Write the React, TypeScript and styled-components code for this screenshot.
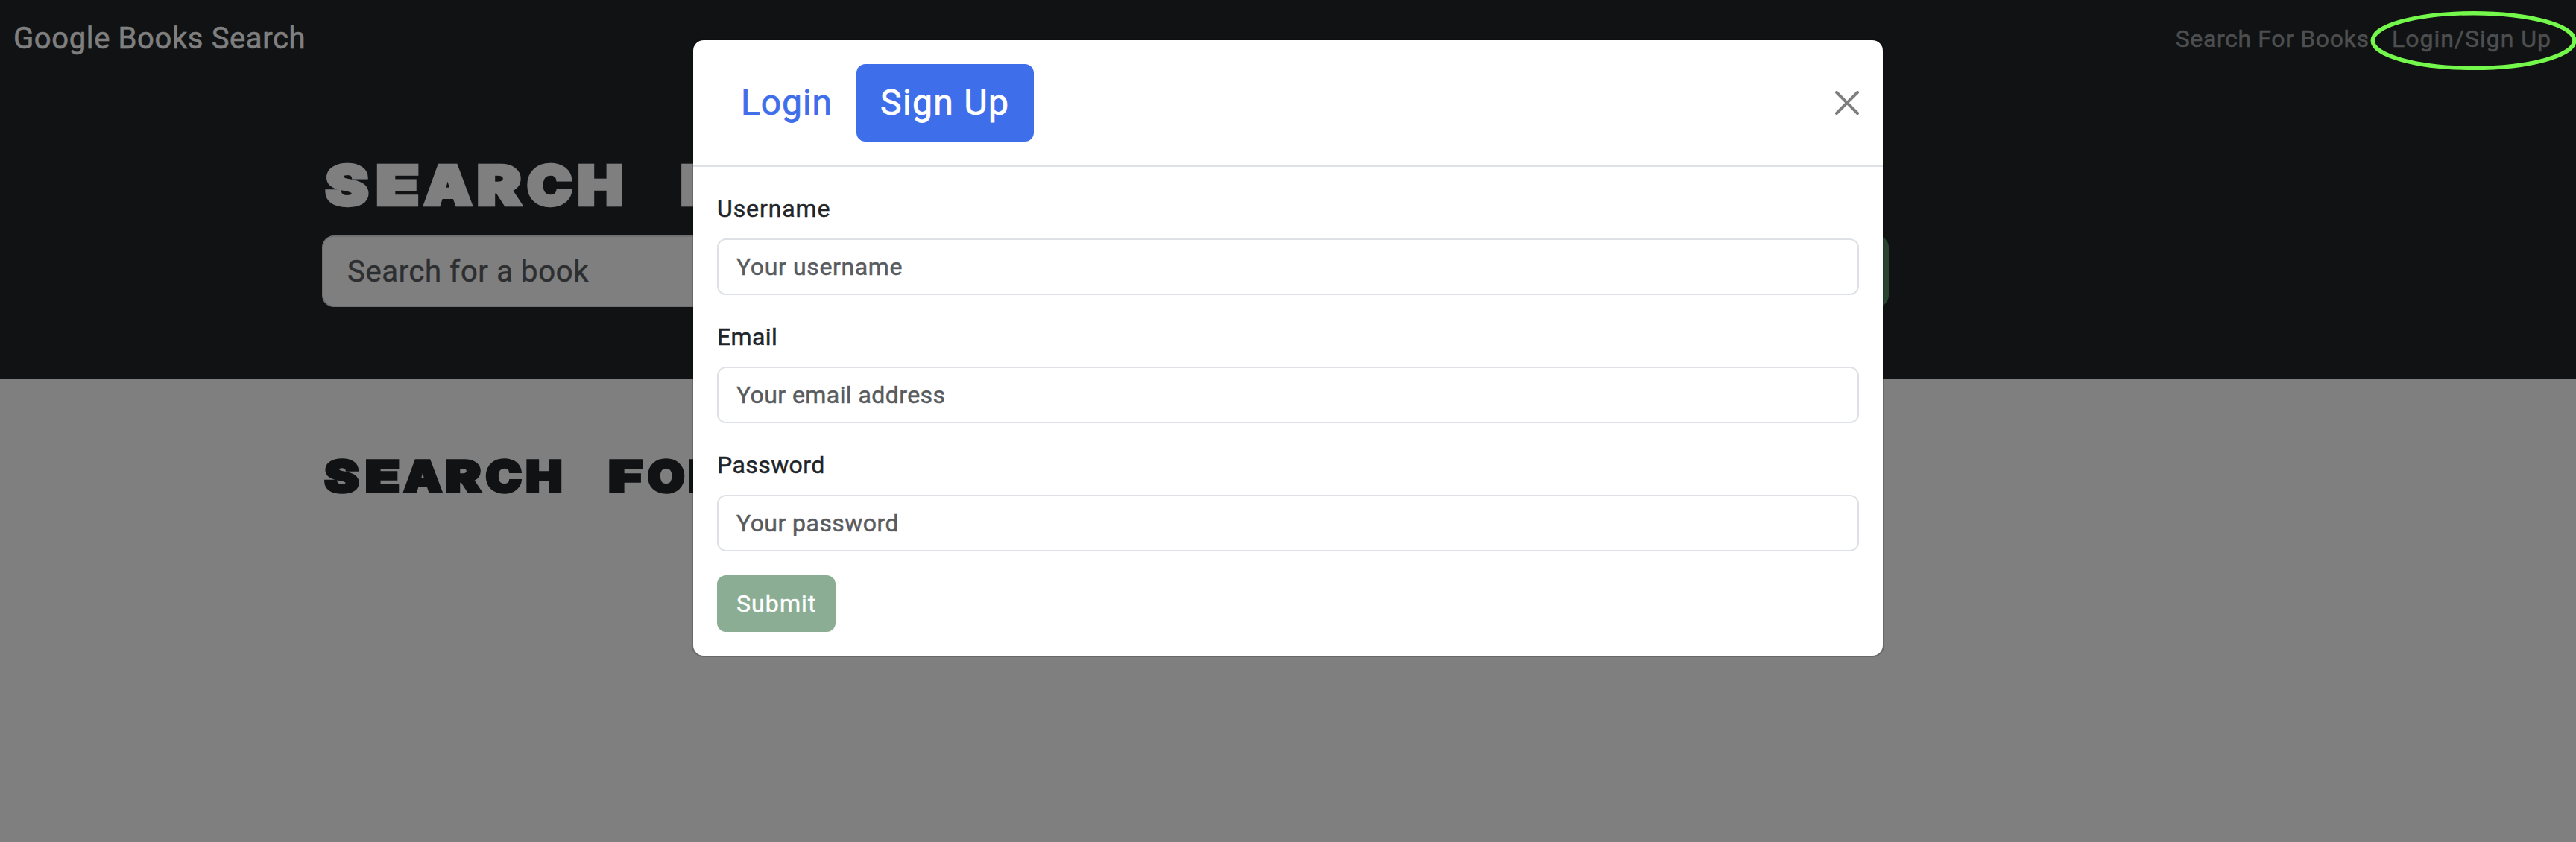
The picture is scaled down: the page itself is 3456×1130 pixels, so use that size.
import React from "react";
import styled, { createGlobalStyle } from "styled-components";

const GlobalStyle = createGlobalStyle`
  *, *::before, *::after { box-sizing: border-box; }
  html, body { margin: 0; padding: 0; background: #fff; }
  body {
    font-family: Roboto, "Liberation Sans", sans-serif;
    font-size: 32px;
    line-height: 1.5;
    color: #212529;
    overflow: hidden;
    -webkit-text-stroke: 0.5px currentColor;
  }
  input, button { font: inherit; -webkit-text-stroke: inherit; }
`;

const Page = styled.div`
  position: relative;
  height: 1130px;
  overflow: hidden;
`;

/* ---------- page behind the dialog ---------- */

const Navbar = styled.nav`
  display: flex;
  align-items: center;
  justify-content: space-between;
  height: 104px;
  padding: 0 33px 0 18px;
  background: #212529;
`;

const Brand = styled.a`
  font-size: 40px;
  letter-spacing: 0.62px;
  color: #fff;
`;

const NavLinks = styled.div`
  display: flex;
  gap: 30.5px;
`;

const NavItem = styled.a<{ $tracking: number }>`
  color: #9b9d9f;
  letter-spacing: ${(p) => p.$tracking}px;
`;

const Hero = styled.header`
  padding: 97px 0 96px;
  background: #212529;
`;

const Container = styled.div`
  width: 2640px;
  margin: 0 auto;
  padding: 0 24px;
`;

const SearchRow = styled.form`
  display: grid;
  grid-template-columns: 1704px 374px;
  gap: 24px;
  margin-top: 19px;
`;

const SearchInput = styled.input`
  height: 96px;
  padding: 16px 32px;
  border: 2px solid #dee2e6;
  border-radius: 16px;
  background: #fff;
  font-size: 40px;
  letter-spacing: 0.65px;
  &::placeholder {
    color: #595c5f;
    opacity: 1;
  }
`;

const SearchButton = styled.button`
  height: 96px;
  border: 0;
  border-radius: 16px;
  background: #54885f;
  color: #fff;
  font-size: 40px;
`;

const Results = styled.section`
  padding-top: 93px;
`;

const Title = styled.h1<{ $size: number; $color: string }>`
  margin: 0 0 0 -1px;
  font-family: Inter, "Liberation Sans", sans-serif;
  font-size: ${(p) => p.$size}px;
  font-weight: 900;
  line-height: 1.2;
  height: 1.2em;
  white-space: nowrap;
  color: ${(p) => p.$color};
`;

const Cell = styled.span`
  display: inline-flex;
  justify-content: center;
  width: 0.85em;
  height: 1.2em;
  white-space: pre;
  vertical-align: top;
`;

const Glyph = styled.span<{ $stretch: number }>`
  display: block;
  font-size: 0.9125em;
  line-height: 1.315;
  -webkit-text-stroke: 0.06em currentColor;
  transform: scaleX(${(p) => p.$stretch});
`;

/* Horizontal stretch that gives each capital its share of the fixed pitch. */
const STRETCH: Record<string, number> = {
  S: 1.19, E: 1.3, A: 1.11, R: 1.22, C: 1.11, H: 1.12, F: 1.35, O: 1.1,
};

function MonoTitle({ text, size, color }: { text: string; size: number; color: string }) {
  return (
    <Title $size={size} $color={color}>
      {text.split("").map((ch, i) => (
        <Cell key={i}>
          <Glyph $stretch={STRETCH[ch] ?? 1.1}>{ch}</Glyph>
        </Cell>
      ))}
    </Title>
  );
}

/* ---------- dialog ---------- */

const Backdrop = styled.div`
  position: absolute;
  inset: 0;
  display: flex;
  align-items: flex-start;
  justify-content: center;
  padding-top: 52px;
  background: rgba(0, 0, 0, 0.5);
`;

const Dialog = styled.div`
  width: 1600px;
  border: 2px solid rgba(0, 0, 0, 0.175);
  border-radius: 16px;
  background: #fff;
  background-clip: padding-box;
`;

const DialogHeader = styled.div`
  display: flex;
  align-items: center;
  justify-content: space-between;
  height: 170px;
  padding: 32px;
  border-bottom: 2px solid #dee2e6;
`;

const Tabs = styled.div`
  display: flex;
`;

const Tab = styled.button<{ $active?: boolean; $width: number; $tracking: number }>`
  width: ${(p) => p.$width}px;
  height: 104px;
  padding: 16px 0 16px 32px;
  border: 0;
  border-radius: 12px;
  text-align: left;
  font-size: 48px;
  line-height: 72px;
  letter-spacing: ${(p) => p.$tracking}px;
  -webkit-text-stroke-width: 0.8px;
  color: ${(p) => (p.$active ? "#fff" : "#3f6eea")};
  background: ${(p) => (p.$active ? "#3f6eea" : "transparent")};
`;

const CloseButton = styled.button`
  display: flex;
  padding: 0;
  border: 0;
  background: none;
  opacity: 0.5;
`;

const Form = styled.form`
  display: flex;
  flex-direction: column;
  align-items: stretch;
  gap: 32px;
  padding: 32px;
`;

const Field = styled.div`
  display: flex;
  flex-direction: column;
  gap: 16px;
`;

const Label = styled.label<{ $tracking: number }>`
  line-height: 48px;
  letter-spacing: ${(p) => p.$tracking}px;
`;

const Input = styled.input<{ $tracking: number }>`
  height: 76px;
  padding: 12px 24px;
  border: 2px solid #dee2e6;
  border-radius: 12px;
  background: #fff;
  letter-spacing: ${(p) => p.$tracking}px;
  &::placeholder {
    color: #595c5f;
    opacity: 1;
  }
`;

const Submit = styled.button`
  align-self: flex-start;
  width: 159px;
  height: 76px;
  padding: 14px 0 14px 26px;
  border: 0;
  border-radius: 12px;
  background: #8bad94;
  color: #fff;
  text-align: left;
  line-height: 48px;
  letter-spacing: 1.1px;
`;

const Marker = styled.svg`
  position: absolute;
  left: 3180px;
  top: 14px;
  width: 276px;
  height: 81px;
`;

const FIELDS = [
  { id: "username", label: "Username", labelTracking: 0.9, placeholder: "Your username", tracking: 0.63, type: "text" },
  { id: "email", label: "Email", labelTracking: 0.4, placeholder: "Your email address", tracking: 0.42, type: "email" },
  { id: "password", label: "Password", labelTracking: 0.42, placeholder: "Your password", tracking: 0.45, type: "password" },
];

export default function App() {
  return (
    <>
      <GlobalStyle />
      <Page>
        <Navbar>
          <Brand>Google Books Search</Brand>
          <NavLinks>
            <NavItem $tracking={0.63}>Search For Books</NavItem>
            <NavItem $tracking={0.98}>Login/Sign Up</NavItem>
          </NavLinks>
        </Navbar>
        <Hero>
          <Container>
            <MonoTitle text="SEARCH FO" size={80} color="#fff" />
            <SearchRow>
              <SearchInput placeholder="Search for a book" />
              <SearchButton type="button" aria-label="Submit Search" />
            </SearchRow>
          </Container>
        </Hero>
        <Results>
          <Container>
            <MonoTitle text="SEARCH FOR" size={64} color="#212529" />
          </Container>
        </Results>

        <Backdrop>
          <Dialog role="dialog">
            <DialogHeader>
              <Tabs>
                <Tab type="button" $width={187} $tracking={0.9}>Login</Tab>
                <Tab type="button" $active $width={238} $tracking={1.4}>Sign Up</Tab>
              </Tabs>
              <CloseButton type="button" aria-label="Close">
                <svg width="32" height="32" viewBox="0 0 16 16" fill="#000">
                  <path d="M.293.293a1 1 0 0 1 1.414 0L8 6.586 14.293.293a1 1 0 1 1 1.414 1.414L9.414 8l6.293 6.293a1 1 0 0 1-1.414 1.414L8 9.414l-6.293 6.293a1 1 0 0 1-1.414-1.414L6.586 8 .293 1.707a1 1 0 0 1 0-1.414z" />
                </svg>
              </CloseButton>
            </DialogHeader>
            <Form>
              {FIELDS.map((f) => (
                <Field key={f.id}>
                  <Label htmlFor={f.id} $tracking={f.labelTracking}>{f.label}</Label>
                  <Input id={f.id} type={f.type} placeholder={f.placeholder} $tracking={f.tracking} />
                </Field>
              ))}
              <Submit type="button">Submit</Submit>
            </Form>
          </Dialog>
        </Backdrop>

        <Marker viewBox="0 0 276 81">
          <ellipse cx="138.5" cy="40.5" rx="135.3" ry="36.8" fill="none" stroke="#75f84c" strokeWidth="5.4" />
        </Marker>
      </Page>
    </>
  );
}
